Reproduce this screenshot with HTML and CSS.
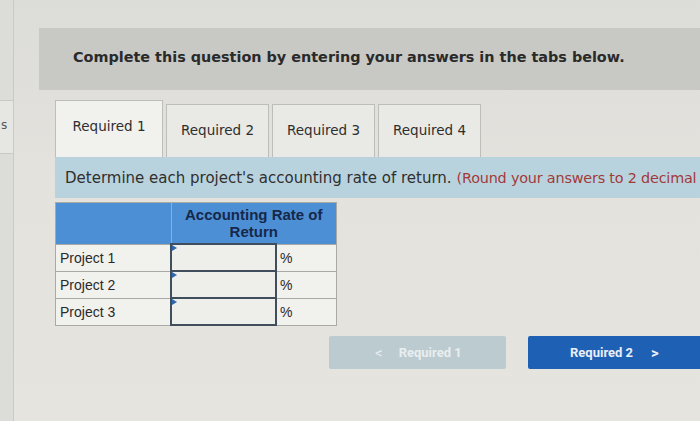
FILE: index.html
```html
<!DOCTYPE html>
<html>
<head>
<meta charset="utf-8">
<link rel="stylesheet" href="styles.css">
</head>
<body>
<div class="page">
  <div class="side">
    <div class="side-tab">s</div>
  </div>
  <div class="main">
    <div class="header">Complete this question by entering your answers in the tabs below.</div>
    <div class="content">
      <div class="tabs">
        <div class="tab active">Required 1</div>
        <div class="tab">Required 2</div>
        <div class="tab">Required 3</div>
        <div class="tab">Required 4</div>
      </div>
      <div class="instr">Determine each project's accounting rate of return. <span class="note">(Round your answers to 2 decimal places.)</span></div>
      <table class="grid">
        <tr class="head">
          <th class="c1"></th>
          <th class="c2" colspan="2">Accounting Rate of<br>Return</th>
        </tr>
        <tr>
          <td class="c1">Project 1</td>
          <td class="inp"><span class="flag"></span></td>
          <td class="pct">%</td>
        </tr>
        <tr>
          <td class="c1">Project 2</td>
          <td class="inp"><span class="flag"></span></td>
          <td class="pct">%</td>
        </tr>
        <tr>
          <td class="c1">Project 3</td>
          <td class="inp"><span class="flag"></span></td>
          <td class="pct">%</td>
        </tr>
      </table>
      <div class="nav">
        <div class="btn prev"><span class="chev">&lt;</span>Required 1</div>
        <div class="btn next">Required 2<span class="chev">&gt;</span></div>
      </div>
    </div>
  </div>
</div>
</body>
</html>
```
FILE: styles.css
```css
html, body {
  margin: 0;
  padding: 0;
}
body {
  width: 700px;
  height: 421px;
  overflow: hidden;
  background: linear-gradient(180deg, #dcdcd8 0%, #e3e2dd 40%, #e6e4de 100%);
  font-family: "DejaVu Sans", Verdana, sans-serif;
}
.page {
  display: flex;
  height: 421px;
}
.side {
  width: 14px;
  flex: none;
  border-right: 1px solid #c9c9c5;
  background: #dcdcd8;
  padding-top: 100px;
  box-sizing: border-box;
}
.side-tab {
  height: 52px;
  border-top: 1px solid #c9c9c5;
  border-bottom: 1px solid #c9c9c5;
  background: #e6e6e2;
  color: #555;
  font-size: 12px;
  line-height: 48px;
  padding-left: 1px;
}
.main {
  flex: 1;
  padding-top: 28px;
  padding-left: 25px;
  min-width: 0;
}
.header {
  height: 62px;
  background: #c8c8c4;
  display: flex;
  align-items: center;
  padding-left: 34px;
  padding-bottom: 4px;
  box-sizing: border-box;
  font-weight: bold;
  font-size: 14.4px;
  color: #2a2a2a;
  white-space: nowrap;
}
.content {
  padding-left: 16px;
  margin-top: 10px;
}
.tabs {
  display: flex;
  align-items: flex-end;
  gap: 3px;
  height: 57px;
}
.tab {
  width: 103px;
  height: 53px;
  box-sizing: border-box;
  border: 1px solid #bdbdb9;
  border-bottom: none;
  background: #e9e9e6;
  color: #2e2e2e;
  font-size: 13.5px;
  display: flex;
  align-items: center;
  justify-content: center;
  padding-bottom: 2px;
}
.tab.active {
  width: 108px;
  height: 57px;
  background: #f1f1ee;
  padding-bottom: 6px;
}
.instr {
  height: 41px;
  background: #b9d3de;
  display: flex;
  align-items: center;
  padding-left: 10px;
  font-size: 15px;
  color: #2f2f2f;
  white-space: nowrap;
  overflow: hidden;
}
.note {
  color: #a23a3a;
  margin-left: 5px;
  font-size: 14.4px;
  letter-spacing: -0.2px;
}
.grid {
  margin-top: 4px;
  border-collapse: collapse;
  font-family: "Liberation Sans", Arial, sans-serif;
  font-size: 14px;
  color: #2a2a2a;
}
.grid td, .grid th {
  border: 1px solid #a9a9a5;
  padding: 0;
}
.head th {
  background: #4d8fd5;
  height: 40px;
  color: #16284a;
  font-size: 15px;
  line-height: 17px;
  font-weight: bold;
}
.c1 {
  width: 110px;
  text-align: left;
  padding-left: 4px !important;
  height: 26px;
  background: #f1f1ee;
}
.head .c1 {
  background: #4d8fd5;
}
.inp {
  width: 103px;
  background: #eeeeeb;
  border: 2px solid #3f4d5c !important;
  position: relative;
}
.flag {
  position: absolute;
  left: 0;
  top: 0;
  width: 0;
  height: 0;
  border-top: 3px solid transparent;
  border-bottom: 3px solid transparent;
  border-left: 5px solid #2f66b0;
}
.pct {
  width: 56px;
  padding-left: 3px !important;
  background: #f1f1ee;
}
.nav {
  display: flex;
  gap: 22px;
  margin-top: 10px;
  margin-left: 274px;
}
.btn {
  flex: none;
  height: 33px;
  display: flex;
  align-items: center;
  justify-content: center;
  font-family: Roboto, "Liberation Sans", sans-serif;
  font-weight: bold;
  font-size: 13px;
  border-radius: 2px;
}
.prev {
  width: 177px;
  background: #bccbcf;
  color: #e8eef0;
  justify-content: flex-start;
  padding-left: 46px;
  box-sizing: border-box;
}
.prev .chev {
  margin-right: 16px;
  font-weight: normal;
  font-size: 15px;
}
.next {
  width: 180px;
  background: #1e60b3;
  color: #e8eefa;
  justify-content: flex-start;
  padding-left: 42px;
  box-sizing: border-box;
}
.next .chev {
  margin-left: 18px;
  font-size: 15px;
}
```
